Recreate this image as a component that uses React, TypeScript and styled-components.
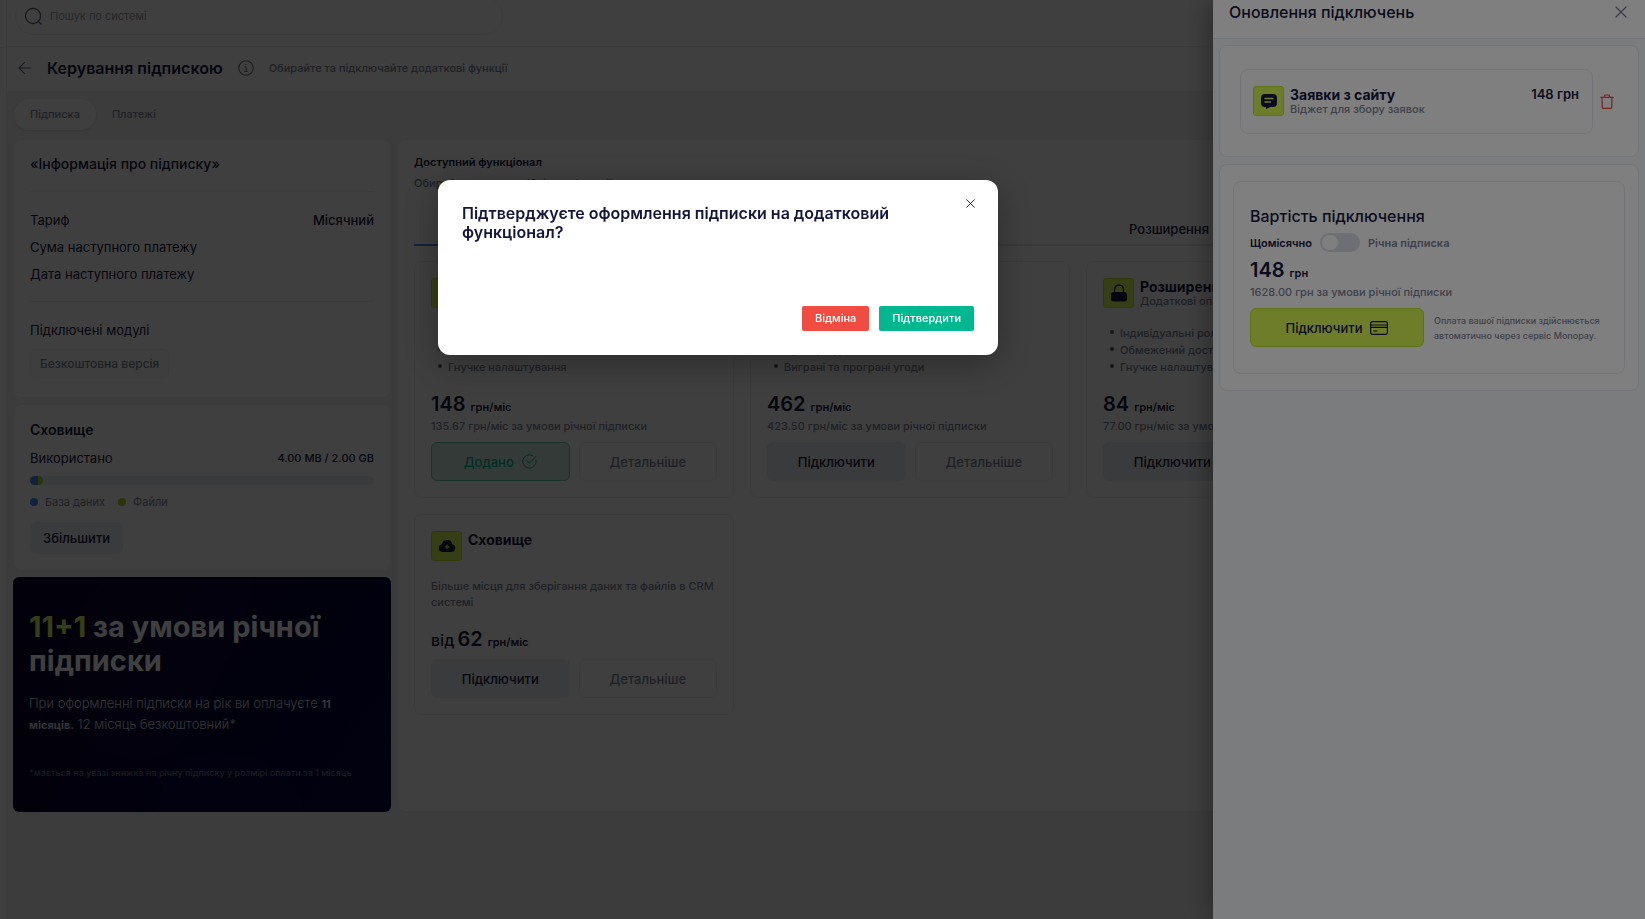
import React from "react";
import styled, { createGlobalStyle, css } from "styled-components";

const ink = "#14163c";
const muted = "#7c8296";
const line = "#eeeff3";
const lime = "#dafa55";
const limeEdge = "#bce628";

const GlobalStyle = createGlobalStyle`
  *, *::before, *::after { box-sizing: border-box; }
  html, body, #root { height: 100%; }
  body {
    margin: 0;
    overflow: hidden;
    background: #f3f3f4;
    color: ${ink};
    font: 400 13px/20px Inter, "Noto Sans", sans-serif;
  }
  h1, h2, h3, p, ul, dl, dd { margin: 0; padding: 0; font: inherit; }
  button, input { font: inherit; color: inherit; }
  button { cursor: pointer; }
  svg { display: block; flex: none; }
`;

/* ---------- page shell ---------- */

const Shell = styled.div`
  display: flex;
  min-height: 100vh;
`;

const Rail = styled.aside`
  flex: none;
  width: 7px;
  background: #fff;
  border-right: 1px solid ${line};
`;

const RailHead = styled.div`
  height: 48px;
  border-bottom: 1px solid ${line};
`;

const Main = styled.main`
  flex: 1;
  min-width: 0;
`;

const TopBar = styled.header`
  display: flex;
  align-items: flex-end;
  height: 47px;
  padding: 0 8px 11px;
  overflow: hidden;
  background: #fff;
  border-bottom: 1px solid ${line};
`;

const SearchBox = styled.label`
  display: flex;
  align-items: center;
  gap: 8px;
  flex: none;
  width: 488px;
  max-width: 100%;
  height: 38px;
  padding: 0 8px;
  border: 1px solid ${line};
  border-radius: 19px;
`;

const SearchInput = styled.input`
  flex: 1;
  min-width: 0;
  padding: 0;
  border: 0;
  outline: 0;
  background: none;
  font-size: 11px;
  line-height: 16px;
  &::placeholder {
    color: #9a9ca6;
    opacity: 1;
  }
`;

const TitleBar = styled.div`
  display: flex;
  align-items: center;
  gap: 15px;
  height: 45px;
  padding: 0 11px 2px;
  background: #fff;
  border-bottom: 1px solid ${line};
`;

const PageTitle = styled.h1`
  font-size: 16px;
  font-weight: 600;
`;

const Hint = styled.p`
  font-size: 11px;
  font-weight: 500;
  line-height: 16px;
  color: ${muted};
`;

const IconButton = styled.button`
  display: flex;
  padding: 0;
  border: 0;
  background: none;
`;

const Content = styled.div`
  padding: 6px;
`;

const Pills = styled.nav`
  display: inline-flex;
  height: 33px;
  margin-bottom: 8px;
  border: 1px solid #f0f1f3;
  border-radius: 17px;
  vertical-align: top;
`;

const Pill = styled.button<{ $on?: boolean }>`
  padding: 0 16px 2px;
  border: 0;
  border-radius: 16px;
  background: none;
  color: ${muted};
  font-size: 11px;
  font-weight: 500;
  ${(p) => p.$on && css`
    background: #fff;
    box-shadow: 0 1px 3px rgba(20, 22, 60, 0.14);
  `}
`;

const Columns = styled.div`
  display: grid;
  grid-template-columns: 378px minmax(0, 1fr);
  gap: 6px;
`;

const Stack = styled.div`
  display: flex;
  flex-direction: column;
  gap: 6px;
`;

const Panel = styled.section`
  padding: 14px 16px 16px;
  background: #fff;
  border: 1px solid ${line};
  border-radius: 8px;
`;

/* ---------- left column ---------- */

const PanelTitle = styled.h2<{ $bold?: boolean }>`
  font-size: 14px;
  font-weight: ${(p) => (p.$bold ? 600 : 500)};
  line-height: ${(p) => (p.$bold ? 22 : 20)}px;
`;

const Rule = styled.hr`
  height: 1px;
  margin: 17px 0 18px;
  border: 0;
  background: ${line};
`;

const Facts = styled.dl`
  display: flex;
  flex-direction: column;
  gap: 7px;
`;

const Fact = styled.div`
  display: flex;
  justify-content: space-between;
  dd { font-weight: 500; }
`;

const Badge = styled.span`
  display: inline-block;
  margin: 9px 0 3px;
  padding: 0 9px;
  border: 1px solid #f0f1f4;
  border-radius: 6px;
  background: #fafafb;
  color: ${muted};
  font-size: 12px;
  font-weight: 500;
  line-height: 27px;
  vertical-align: top;
`;

const Usage = styled.div`
  display: flex;
  justify-content: space-between;
  margin: 7px 0 8px;
  strong {
    font-size: 11px;
    font-weight: 500;
  }
`;

const Meter = styled.div`
  display: flex;
  height: 9px;
  overflow: hidden;
  border-radius: 5px;
  background: #ebeef2;
`;

const MeterPart = styled.span<{ $color: string; $width: number; $end?: boolean }>`
  width: ${(p) => p.$width}px;
  background: ${(p) => p.$color};
  border-radius: ${(p) => (p.$end ? "0 5px 5px 0" : "0")};
`;

const Legend = styled.ul`
  display: flex;
  gap: 13px;
  margin: 9px 0 12px;
  list-style: none;
  font-size: 11px;
  line-height: 16px;
  color: ${muted};
  li {
    display: flex;
    align-items: center;
    gap: 7px;
  }
`;

const Dot = styled.i<{ $color: string }>`
  width: 8px;
  height: 8px;
  border-radius: 50%;
  background: ${(p) => p.$color};
`;

const Promo = styled.section`
  position: relative;
  overflow: hidden;
  height: 235px;
  padding: 33px 16px 0;
  border-radius: 6px;
  background: linear-gradient(125deg, #04022c 20%, #080440 100%);
  color: #fff;
`;

const PromoArt = styled.svg`
  position: absolute;
  inset: 0;
  width: 100%;
  height: 100%;
`;

const PromoBody = styled.div`
  position: relative;
  h2 {
    font-size: 29px;
    font-weight: 700;
    line-height: 34px;
  }
  em {
    color: ${lime};
    font-style: normal;
  }
  p {
    margin-top: 15px;
    font-weight: 300;
    color: #cfcfdc;
  }
  b {
    font-size: 11px;
    font-weight: 700;
  }
  small {
    display: block;
    margin-top: 30px;
    font-size: 9px;
    font-weight: 500;
    line-height: 16px;
    color: #6a6a84;
  }
`;

/* ---------- available features ---------- */

const FeatureTitle = styled.h2`
  font-size: 11px;
  font-weight: 600;
  line-height: 16px;
`;

const FeatureHint = styled(Hint)`
  margin-top: 5px;
`;

const Tabs = styled.div`
  display: flex;
  margin: 23px 0 15px;
`;

const Tab = styled.button<{ $on?: boolean }>`
  flex: 1;
  height: 32px;
  padding: 0;
  border: 0;
  border-bottom: 2px solid ${(p) => (p.$on ? "#4a8df0" : "#e3e5ea")};
  background: none;
  font-weight: 500;
`;

const CardGrid = styled.div`
  display: grid;
  grid-template-columns: repeat(3, 320px);
  align-items: start;
  gap: 16px;
`;

const Card = styled.article`
  padding: 16px;
  border: 1px solid ${line};
  border-radius: 8px;
  font-size: 11px;
  line-height: 16px;
`;

const CardHead = styled.header`
  display: flex;
  gap: 6px;
  h3 {
    font-size: 14px;
    font-weight: 700;
    line-height: 17px;
    white-space: nowrap;
  }
  p {
    font-size: 11px;
    font-weight: 500;
    line-height: 13px;
    white-space: nowrap;
    color: ${muted};
  }
`;

const IconTile = styled.span`
  display: flex;
  align-items: center;
  justify-content: center;
  flex: none;
  width: 31px;
  height: 30px;
  border: 1px solid ${limeEdge};
  border-radius: 3px;
  background: ${lime};
`;

const Details = styled.div<{ $list: boolean }>`
  margin: ${(p) => (p.$list ? "17px 0 16px" : "17px 0")};
  color: ${muted};
  font-weight: 500;
  ul {
    padding-left: 17px;
    list-style: none;
  }
  li {
    position: relative;
    line-height: 17px;
  }
  li::before {
    content: "";
    position: absolute;
    left: -10px;
    top: 5px;
    width: 4px;
    height: 4px;
    border-radius: 50%;
    background: #5a5f78;
  }
`;

const Price = styled.p`
  display: flex;
  align-items: baseline;
  height: 24px;
  font-size: 20px;
  font-weight: 600;
  line-height: 24px;
  span {
    margin-right: 3px;
    font-size: 16px;
    font-weight: 500;
  }
  small {
    margin-left: 5px;
    font-size: 11px;
  }
`;

const PriceNote = styled.p`
  margin-top: 2px;
  font-size: 11px;
  font-weight: 500;
  line-height: 16px;
  color: ${muted};
`;

const Actions = styled.div`
  display: flex;
  gap: 9px;
  margin-top: 8px;
`;

const tones = {
  soft: css`background: #e9edf2; border-color: #e9edf2;`,
  outline: css`background: #fff; border-color: ${line}; color: ${muted};`,
  added: css`background: #cfebe2; border-color: #62c9aa; color: #00b88d;`,
  lime: css`background: ${lime}; border-color: ${limeEdge};`,
};

const Button = styled.button<{ $tone: keyof typeof tones; $grow?: boolean }>`
  display: inline-flex;
  align-items: center;
  justify-content: center;
  gap: 8px;
  flex: ${(p) => (p.$grow ? "1" : "none")};
  height: ${(p) => (p.$grow ? 39 : 32)}px;
  padding: 0 12px;
  border: 1px solid;
  border-radius: 6px;
  font-size: 13px;
  font-weight: 500;
  ${(p) => tones[p.$tone]}
`;

/* ---------- overlays ---------- */

const Backdrop = styled.div`
  position: fixed;
  inset: 0;
  background: rgba(0, 0, 0, 0.5);
`;

const Drawer = styled.aside`
  position: fixed;
  top: 0;
  right: 0;
  bottom: 0;
  width: 432px;
  background: #f7f9fd;
  box-shadow: -4px 0 24px rgba(0, 0, 0, 0.35);
`;

const DrawerHead = styled.header`
  display: flex;
  align-items: center;
  justify-content: space-between;
  padding: 2px 18px 16px 16px;
  background: #fff;
  border-bottom: 1px solid #e6e8f0;
  h2 {
    font-size: 16px;
    font-weight: 500;
  }
`;

const DrawerBody = styled.div`
  display: flex;
  flex-direction: column;
  gap: 7px;
  padding: 6px;
`;

const Sheet = styled.section<{ $pad: string }>`
  padding: ${(p) => p.$pad};
  background: #fff;
  border: 1px solid #e8eaf1;
  border-radius: 8px;
`;

const OrderRow = styled.div`
  display: flex;
  align-items: center;
  gap: 7px;
`;

const OrderItem = styled.div`
  display: flex;
  justify-content: space-between;
  flex: 1;
  padding: 16px 13px 17px 12px;
  border: 1px solid #e8eaf1;
  border-radius: 8px;
  strong {
    font-weight: 600;
    line-height: 16px;
  }
`;

const CostBox = styled.div`
  padding: 24px 16px 26px;
  border: 1px solid #e8eaf1;
  border-radius: 8px;
  h3 {
    font-size: 16px;
    font-weight: 500;
  }
`;

const Period = styled.label<{ $on?: boolean }>`
  color: ${(p) => (p.$on ? ink : muted)};
  font-weight: 600;
`;

const PeriodRow = styled.div`
  display: flex;
  align-items: center;
  gap: 8px;
  height: 19px;
  margin: 7px 0 6px;
  font-size: 11px;
`;

const Switch = styled.input`
  appearance: none;
  width: 40px;
  height: 19px;
  margin: 0;
  padding: 2px;
  border-radius: 10px;
  background: #dcdee8;
  &::before {
    content: "";
    display: block;
    width: 16px;
    height: 15px;
    border-radius: 8px;
    background: #fff;
  }
  &:checked::before { margin-left: 20px; }
`;

const PayRow = styled.div`
  display: flex;
  align-items: center;
  gap: 10px;
  margin-top: 8px;
  p {
    flex: none;
    width: 174px;
    font-size: 9px;
    font-weight: 500;
    line-height: 15px;
    color: ${muted};
  }
`;

const ModalLayer = styled(Backdrop)`
  display: flex;
  align-items: flex-start;
  justify-content: center;
  padding: 180px 209px 0 0;
`;

const Modal = styled.section`
  position: relative;
  width: 560px;
  padding: 24px;
  border-radius: 12px;
  background: #fff;
  box-shadow: 0 8px 32px rgba(0, 0, 0, 0.3);
  h2 {
    font-size: 16px;
    font-weight: 600;
    line-height: 19px;
  }
`;

const ModalClose = styled(IconButton)`
  position: absolute;
  top: 19px;
  right: 23px;
`;

const ModalActions = styled.div`
  display: flex;
  justify-content: flex-end;
  gap: 10px;
  margin-top: 64px;
`;

const ModalButton = styled.button<{ $color: string }>`
  height: 25px;
  padding: 0 13px 1px;
  border: 0;
  border-radius: 2px;
  background: ${(p) => p.$color};
  color: #fff;
  font-size: 11px;
  font-weight: 500;
  line-height: 16px;
`;

/* ---------- icons ---------- */

const SearchIcon = () => (
  <svg width="18" height="18" viewBox="0 0 18 18" fill="none" stroke="#5b5f78" strokeWidth="1.3">
    <circle cx="9" cy="9" r="7.6" />
    <path d="M14 14.200l3 2.800" strokeLinecap="round" />
  </svg>
);

const BackIcon = () => (
  <svg width="14" height="14" viewBox="0 0 14 14" fill="none" stroke="#6b6f86" strokeWidth="1.200" strokeLinecap="round" strokeLinejoin="round">
    <path d="M13 7H1M6.600 1.400L1 7l5.600 5.600" />
  </svg>
);

const InfoIcon = () => (
  <svg width="16" height="16" viewBox="0 0 16 16" fill="none" stroke="#6b6f86" strokeWidth="1.100">
    <circle cx="8" cy="8" r="7.200" />
    <path d="M6.800 6.800h1.300v4.600M6.500 11.500h3.200" strokeWidth="1" />
    <circle cx="7.900" cy="4.500" r=".7" fill="#6b6f86" stroke="none" />
  </svg>
);

const CrossIcon = ({ size, color }: { size: number; color: string }) => (
  <svg width={size} height={size} viewBox="0 0 10 10" stroke={color} strokeWidth="1" strokeLinecap="round">
    <path d="M.8.8l8.400 8.400M9.200.8L.8 9.200" />
  </svg>
);

const ChatIcon = () => (
  <svg width="18" height="18" viewBox="0 0 18 18">
    <path d="M5 2h8a4 4 0 0 1 4 4v5a4 4 0 0 1-4 4h-2.500L6 17l-.3-2H5a4 4 0 0 1-4-4V6a4 4 0 0 1 4-4z" fill={ink} />
    <path d="M5 6.500h8M5 10h5.500" stroke={lime} strokeWidth="1.300" strokeLinecap="round" />
  </svg>
);

const LockIcon = () => (
  <svg width="18" height="18" viewBox="0 0 18 18">
    <path d="M4.500 9V5.500a4.500 4.500 0 0 1 9 0V9" fill="none" stroke={ink} strokeWidth="1.300" />
    <rect x="1" y="8" width="16" height="9.500" rx="2.500" fill={ink} />
  </svg>
);

const ChartIcon = () => (
  <svg width="18" height="18" viewBox="0 0 18 18" fill={ink}>
    <path d="M2 9h3v7H2zM7.500 3h3v13h-3zM13 6h3v10h-3z" />
  </svg>
);

const CloudIcon = () => (
  <svg width="18" height="18" viewBox="0 0 18 18">
    <path d="M4.500 15A3.900 3.900 0 0 1 3.900 7.300a5.200 5.200 0 0 1 10.200 0A3.900 3.900 0 0 1 13.500 15z" fill={ink} />
    <path d="M9 7.500v4.600M6.700 9.800h4.600" stroke={lime} strokeWidth="1.200" />
  </svg>
);

const CheckIcon = () => (
  <svg width="15" height="15" viewBox="0 0 15 15" fill="none" stroke="#00b88d" strokeLinecap="round">
    <path d="M10.800 1.600A6.700 6.700 0 1 0 14 6" />
    <path d="M5 6.800l2.500 2.300L14 2.200" />
  </svg>
);

const TrashIcon = () => (
  <svg width="14" height="16" viewBox="0 0 14 16" fill="none" stroke="#f0483f" strokeWidth="1.200" strokeLinecap="round" strokeLinejoin="round">
    <path d="M.8 3.400h12.400M4 3.400L5 1h4l1 2.400M2 3.400l.3 10q0 1 1 1h7.400q1 0 1-1l.3-10" />
  </svg>
);

const PayIcon = () => (
  <svg width="18" height="14" viewBox="0 0 18 14" fill="none" stroke={ink} strokeWidth="1.200">
    <rect x=".6" y=".6" width="16.800" height="12.800" rx="1.800" />
    <path d="M1 4h16M1 6.300h16M3 10h4.500" />
  </svg>
);

/* ---------- data ---------- */

type Feature = {
  name: string;
  about?: string;
  icon: React.ReactNode;
  points?: string[];
  text?: string;
  from?: boolean;
  price: string;
  yearly?: string;
  added?: boolean;
};

const features: Feature[] = [
  {
    name: "Заявки з сайту",
    about: "Віджет для збору заявок",
    icon: <ChatIcon />,
    points: ["Форма для сайту", "Заявки в системі", "Гнучке налаштування"],
    price: "148",
    yearly: "135.67",
    added: true,
  },
  {
    name: "Аналітика",
    about: "Звіти та показники",
    icon: <ChartIcon />,
    points: ["Звіти продажів", "Сума угод", "Виграні та програні угоди"],
    price: "462",
    yearly: "423.50",
  },
  {
    name: "Розширення прав",
    about: "Додаткові опції доступу",
    icon: <LockIcon />,
    points: ["Індивідуальні ролі", "Обмежений доступ", "Гнучке налаштування"],
    price: "84",
    yearly: "77.00",
  },
  {
    name: "Сховище",
    icon: <CloudIcon />,
    text: "Більше місця для зберігання даних та файлів в CRM системі",
    from: true,
    price: "62",
  },
];

const FeatureCard = ({ item }: { item: Feature }) => (
  <Card>
    <CardHead>
      <IconTile>{item.icon}</IconTile>
      <div>
        <h3>{item.name}</h3>
        {item.about && <p>{item.about}</p>}
      </div>
    </CardHead>
    <Details $list={Boolean(item.points)}>
      {item.points ? (
        <ul>{item.points.map((point) => <li key={point}>{point}</li>)}</ul>
      ) : (
        <p>{item.text}</p>
      )}
    </Details>
    <Price>
      {item.from && <span>від</span>}
      {item.price}
      <small>грн/міс</small>
    </Price>
    {item.yearly && <PriceNote>{item.yearly} грн/міс за умови річної підписки</PriceNote>}
    <Actions>
      {item.added ? (
        <Button $tone="added" $grow>Додано <CheckIcon /></Button>
      ) : (
        <Button $tone="soft" $grow>Підключити</Button>
      )}
      <Button $tone="outline" $grow>Детальніше</Button>
    </Actions>
  </Card>
);

export default function App() {
  return (
    <>
      <GlobalStyle />
      <Shell>
        <Rail><RailHead /></Rail>
        <Main>
          <TopBar>
            <SearchBox>
              <SearchIcon />
              <SearchInput type="search" placeholder="Пошук по системі" aria-label="Пошук по системі" />
            </SearchBox>
          </TopBar>
          <TitleBar>
            <IconButton aria-label="Назад"><BackIcon /></IconButton>
            <PageTitle>Керування підпискою</PageTitle>
            <InfoIcon />
            <Hint>Обирайте та підключайте додаткові функції</Hint>
          </TitleBar>
          <Content>
            <Pills>
              <Pill $on>Підписка</Pill>
              <Pill>Платежі</Pill>
            </Pills>
            <Columns>
              <Stack>
                <Panel>
                  <PanelTitle>«Інформація про підписку»</PanelTitle>
                  <Rule />
                  <Facts>
                    <Fact><dt>Тариф</dt><dd>Місячний</dd></Fact>
                    <Fact><dt>Сума наступного платежу</dt></Fact>
                    <Fact><dt>Дата наступного платежу</dt></Fact>
                  </Facts>
                  <Rule />
                  <p>Підключені модулі</p>
                  <Badge>Безкоштовна версія</Badge>
                </Panel>
                <Panel>
                  <PanelTitle $bold>Сховище</PanelTitle>
                  <Usage>
                    <span>Використано</span>
                    <strong>4.00 MB / 2.00 GB</strong>
                  </Usage>
                  <Meter>
                    <MeterPart $color="#4a86e8" $width={8} />
                    <MeterPart $color="#a9cf2c" $width={5} $end />
                  </Meter>
                  <Legend>
                    <li><Dot $color="#4a86e8" />База даних</li>
                    <li><Dot $color="#a9cf2c" />Файли</li>
                  </Legend>
                  <Button $tone="soft">Збільшити</Button>
                </Panel>
                <Promo>
                  <PromoArt viewBox="0 0 378 235" preserveAspectRatio="none" aria-hidden="true">
                    <path d="M90 0C62 40 46 80 51 118c7 42 42 66 78 66 40 0 56-40 74-80C216 76 238 40 240 0z" fill="#fff" opacity=".025" />
                    <path d="M145 235c2-38 16-60 54-60 50 0 82 24 94 60z" fill="#5a50ff" opacity=".04" />
                  </PromoArt>
                  <PromoBody>
                    <h2><em>11+1</em> за умови річної підписки</h2>
                    <p>При оформленні підписки на рік ви оплачуєте <b>11 місяців.</b> 12 місяць безкоштовний*</p>
                    <small>*мається на увазі знижка на річну підписку у розмірі оплати за 1 місяць</small>
                  </PromoBody>
                </Promo>
              </Stack>
              <Panel>
                <FeatureTitle>Доступний функціонал</FeatureTitle>
                <FeatureHint>Обирайте лише потрібні вам функції</FeatureHint>
                <Tabs>
                  <Tab $on>Усі</Tab>
                  <Tab>Модулі</Tab>
                  <Tab>Розширення</Tab>
                  <Tab>Послуги</Tab>
                </Tabs>
                <CardGrid>
                  {features.map((item) => <FeatureCard key={item.name} item={item} />)}
                </CardGrid>
              </Panel>
            </Columns>
          </Content>
        </Main>
      </Shell>

      <Backdrop />
      <Drawer aria-label="Оновлення підключень">
        <DrawerHead>
          <h2>Оновлення підключень</h2>
          <IconButton aria-label="Закрити"><CrossIcon size={12} color="#6f7390" /></IconButton>
        </DrawerHead>
        <DrawerBody>
          <Sheet $pad="23px 24px 22px 20px">
            <OrderRow>
              <OrderItem>
                <CardHead>
                  <IconTile><ChatIcon /></IconTile>
                  <div>
                    <h3>Заявки з сайту</h3>
                    <p>Віджет для збору заявок</p>
                  </div>
                </CardHead>
                <strong>148 грн</strong>
              </OrderItem>
              <IconButton aria-label="Видалити"><TrashIcon /></IconButton>
            </OrderRow>
          </Sheet>
          <Sheet $pad="16px 13px">
            <CostBox>
              <h3>Вартість підключення</h3>
              <PeriodRow>
                <Period $on htmlFor="yearly">Щомісячно</Period>
                <Switch id="yearly" type="checkbox" />
                <Period htmlFor="yearly">Річна підписка</Period>
              </PeriodRow>
              <Price>148<small>грн</small></Price>
              <PriceNote>1628.00 грн за умови річної підписки</PriceNote>
              <PayRow>
                <Button $tone="lime" $grow>Підключити <PayIcon /></Button>
                <p>Оплата вашої підписки здійснюється автоматично через сервіс Monopay.</p>
              </PayRow>
            </CostBox>
          </Sheet>
        </DrawerBody>
      </Drawer>

      <ModalLayer>
        <Modal role="dialog" aria-modal="true" aria-labelledby="confirm-title">
          <h2 id="confirm-title">Підтверджуєте оформлення підписки на додатковий функціонал?</h2>
          <ModalClose aria-label="Закрити"><CrossIcon size={9} color={ink} /></ModalClose>
          <ModalActions>
            <ModalButton $color="#f04c41">Відміна</ModalButton>
            <ModalButton $color="#00b88f">Підтвердити</ModalButton>
          </ModalActions>
        </Modal>
      </ModalLayer>
    </>
  );
}
